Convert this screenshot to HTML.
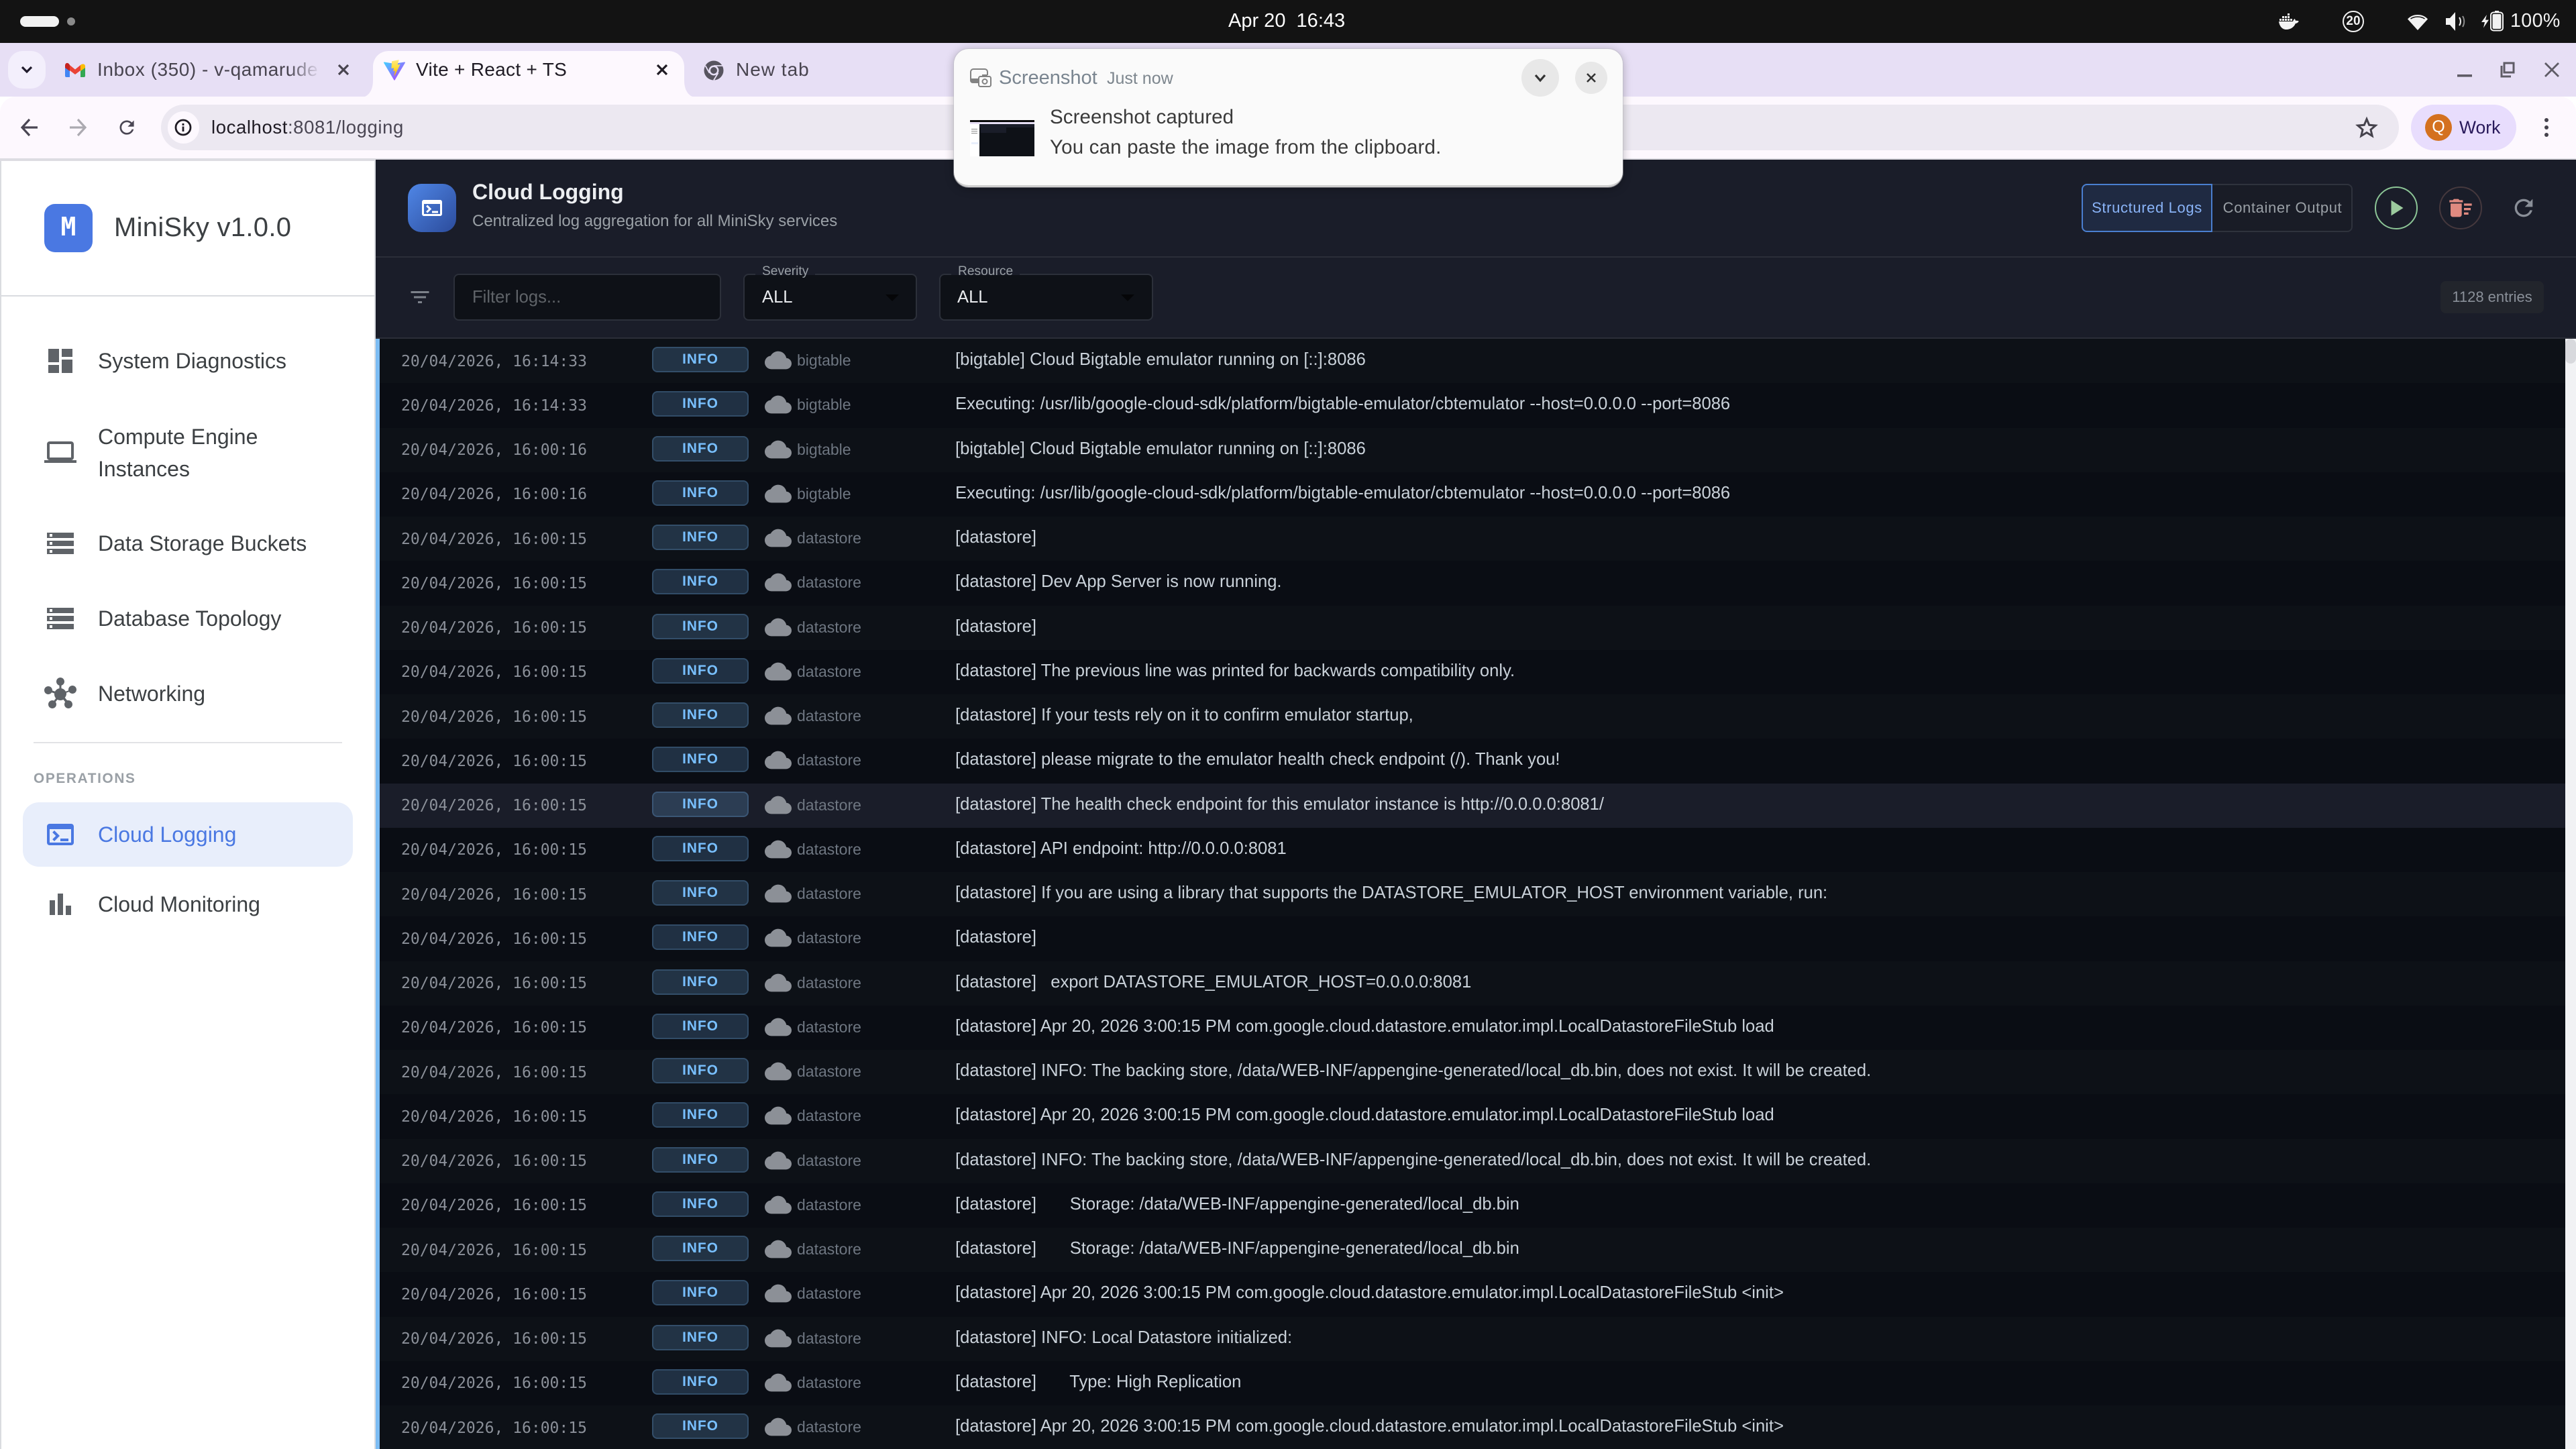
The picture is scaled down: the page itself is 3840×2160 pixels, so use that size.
<!DOCTYPE html>
<html lang="en"><head><meta charset="utf-8"><title>Vite + React + TS</title>
<style>
*{box-sizing:border-box}
html,body{margin:0;padding:0;width:3840px;height:2160px;overflow:hidden;background:#fff;font-family:"Liberation Sans",sans-serif}
.a{position:absolute;white-space:pre}
svg{position:absolute;display:block;overflow:visible}
#sys{position:absolute;left:0;top:0;width:3840px;height:64px;background:#131313}
#strip{position:absolute;left:0;top:64px;width:3840px;height:80px;background:#e7dff5}
#tool{position:absolute;left:0;top:144px;width:3840px;height:92px;background:#fdf8fe;border-radius:24px 24px 0 0}
#tline{position:absolute;left:0;top:236px;width:3840px;height:4px;background:#dddce2}
#omni{position:absolute;left:240px;top:156px;width:3336px;height:68px;border-radius:34px;background:#ece8f1}
#side{position:absolute;left:0;top:240px;width:560px;height:1920px;background:#fff;border-left:2px solid #dadce0;border-right:2px solid #dadce0}
.nav{position:absolute;left:146px;font-size:32px;line-height:48px;color:#3c4043;white-space:pre}
#main{position:absolute;left:560px;top:238px;width:3280px;height:1922px;background:#1a1d29}
.box{position:absolute;background:#0e1117;border:2px solid #2c303a;border-radius:8px;height:70px;top:408px}
.lab{position:absolute;top:394px;height:16px;background:#1a1d29;font-size:19.2px;line-height:22px;color:#9aa0a6;white-space:pre;padding:0 10px}
.v{position:absolute;top:428px;font-size:25.6px;line-height:30px;white-space:pre}
#rows{position:absolute;left:560px;top:505px;width:3264px;height:1655px;border-left:6px solid #7cbcf3;overflow:hidden}
.r{position:relative;height:66.25px;background:#0d1117}
.r:nth-child(even){background:#0a0d14}
.r.h{background:#1a1d29}
.r i{position:absolute;left:32px;top:18.5px;font:normal 23px/30px "DejaVu Sans Mono",monospace;color:#8b9099;white-space:pre}
.r b{position:absolute;left:406px;top:12px;width:144px;height:38px;border-radius:8px;background:rgba(121,192,255,.2);border:2px solid rgba(121,192,255,.2);color:#79c0ff;font:bold 20.8px/33px "Liberation Sans",sans-serif;letter-spacing:1.04px;text-align:center}
.r svg{left:574px;top:12px;width:40px;height:40px;fill:#8c9097}
.r u{position:absolute;left:622px;top:17px;font-size:23px;line-height:30px;color:#6e7681;text-decoration:none}
.r p{position:absolute;left:858px;top:16px;margin:0;font-size:25.6px;line-height:30px;color:#c9d1d9;white-space:pre}
#note{position:absolute;left:1422px;top:73px;width:997px;height:206px;background:#fafafa;border-radius:22px;border-bottom:3px solid #cfcfcf;box-shadow:0 0 0 1px rgba(190,190,195,.5),0 2px 14px rgba(0,0,0,.28)}
</style></head><body>

<svg width="0" height="0" style="position:absolute"><defs>
<symbol id="c" viewBox="0 0 24 24"><path d="M19.35 10.04C18.67 6.59 15.64 4 12 4 9.11 4 6.6 5.64 5.35 8.04 2.34 8.36 0 10.91 0 14c0 3.31 2.69 6 6 6h13c2.76 0 5-2.24 5-5 0-2.64-2.05-4.78-4.65-4.96z"/></symbol>
<symbol id="st" viewBox="0 0 24 24"><path d="M2 20h20v-4H2v4zm2-3h2v2H4v-2zM2 4v4h20V4H2zm4 3H4V5h2v2zm-4 7h20v-4H2v4zm2-3h2v2H4v-2z"/></symbol>
<symbol id="tm" viewBox="0 0 24 24"><path d="M20 4H4c-1.1 0-2 .9-2 2v12c0 1.1.9 2 2 2h16c1.1 0 2-.9 2-2V6c0-1.1-.9-2-2-2zm0 14H4V8h16v10zm-2-1h-6v-2h6v2zM7.5 17l-1.41-1.41L8.67 13l-2.59-2.59L7.5 9l4 4-4 4z"/></symbol>
<linearGradient id="vg" x1="0" y1="0" x2="1" y2="1"><stop offset="0" stop-color="#41d1ff"/><stop offset="1" stop-color="#bd34fe"/></linearGradient>
<linearGradient id="vy" x1="0" y1="0" x2="0" y2="1"><stop offset="0" stop-color="#ffea83"/><stop offset=".5" stop-color="#ffdd35"/><stop offset="1" stop-color="#ffa800"/></linearGradient>
</defs></svg>

<div id="sys"></div>
<div class="a" style="left:30px;top:24px;width:58px;height:16px;border-radius:8px;background:#f2f2f2"></div>
<div class="a" style="left:100px;top:26px;width:12px;height:12px;border-radius:6px;background:#8a8a8a"></div>
<div class="a" style="left:1831px;top:14px;font-size:29px;line-height:34px;color:#fff">Apr 20  16:43</div>
<!-- docker -->
<svg style="left:3397px;top:20px" width="30" height="24" viewBox="0 0 30 24" fill="#f2f2f2"><path d="M13 0h3v3h-3zM5 4h3v3H5zM9 4h3v3H9zM13 4h3v3h-3zM1 8h3v3H1zM5 8h3v3H5zM9 8h3v3H9zM13 8h3v3h-3zM17 8h3v3h-3z"/><path d="M0 12h21c.6-2 1.6-3.2 2.6-4 .8 1 1.2 1.9 1.4 3 1.6-.4 3.4-.2 4.8.8C28.5 14 26.8 15 24.8 15 23 20 18 24 11 24 5 24 1 19 0 12z"/></svg>
<svg style="left:3492px;top:16px" width="32" height="32" viewBox="0 0 32 32"><circle cx="16" cy="16" r="15" fill="none" stroke="#f2f2f2" stroke-width="2"/></svg>
<div class="a" style="left:3492px;top:16px;width:32px;text-align:center;font:bold 19px/32px 'Liberation Sans',sans-serif;color:#f2f2f2">20</div>
<svg style="left:3589px;top:21px" width="30" height="24" viewBox="0 0 30 24"><path d="M0 7.5C4 3 9 1 15 1s11 2 15 6.5L15 24z" fill="#f2f2f2"/><path d="M4.5 7C7.5 5 11 4 15 4s7.5 1 10.5 3" fill="none" stroke="#131313" stroke-width="1.5"/></svg>
<svg style="left:3646px;top:18px" width="28" height="28" viewBox="0 0 28 28"><path d="M0 9h6l8-9v28l-8-9H0z" fill="#f2f2f2"/><path d="M20 8c2.5 3.5 2.5 8.5 0 12" fill="none" stroke="#f2f2f2" stroke-width="2"/><path d="M25 6c3 5 3 11 0 16" fill="none" stroke="#f2f2f2" stroke-width="2" opacity=".55"/></svg>
<svg style="left:3699px;top:16px" width="34" height="30" viewBox="0 0 34 30"><path d="M8 7 0 20h5l-2 10 8-14H6z" fill="#f2f2f2" transform="scale(1 .85)"/><rect x="14" y="2.5" width="18" height="27" rx="4" fill="none" stroke="#f2f2f2" stroke-width="2"/><rect x="20" y="0" width="6" height="3" fill="#f2f2f2"/><rect x="16.5" y="5" width="13" height="22" rx="2" fill="#f2f2f2"/></svg>
<div class="a" style="left:3742px;top:14px;font-size:28.6px;line-height:34px;color:#f2f2f2;letter-spacing:.4px">100%</div>

<div id="strip"></div>
<div class="a" style="left:12px;top:76px;width:56px;height:56px;border-radius:22px;background:#f3effc"></div>
<svg style="left:30px;top:96px" width="20" height="16" viewBox="0 0 20 16"><path d="M3 4l7 7 7-7" fill="none" stroke="#1f1a2b" stroke-width="3.2"/></svg>

<!-- gmail -->
<svg style="left:97px;top:93px" width="30" height="22" viewBox="0 0 30 22"><path d="M0 5h7v17H2a2 2 0 0 1-2-2z" fill="#4285f4"/><path d="M23 5h7v15a2 2 0 0 1-2 2h-5z" fill="#34a853"/><path d="M7 4l8 6.5L23 4v8l-8 6-8-6z" fill="#ea4335"/><path d="M23 4c2-2 7-2.5 7 2v2l-7 5z" fill="#fbbc04"/><path d="M7 4C5-.5 0 0 0 5v3l7 5z" fill="#c5221f"/></svg>
<div class="a" style="left:145px;top:88px;width:331px;height:34px;overflow:hidden;font-size:28px;line-height:32px;color:#48444f;letter-spacing:.55px">Inbox (350) - v-qamarude</div>
<div class="a" style="left:430px;top:88px;width:48px;height:34px;background:linear-gradient(90deg,rgba(231,223,245,0),#e7dff5)"></div>
<svg style="left:503px;top:95px" width="18" height="18" viewBox="0 0 18 18"><path d="M2 2l14 14M16 2L2 16" stroke="#48444f" stroke-width="3.2"/></svg>

<svg style="left:0;top:0" width="3840" height="160" viewBox="0 0 3840 160"><path d="M534 146C550 146 556 134 556 120V100C556 86 566 76 580 76H996C1010 76 1020 86 1020 100V120C1020 134 1026 146 1042 146Z" fill="#fdf8fe"/></svg>
<svg style="left:572px;top:89px" width="32" height="31" viewBox="0 0 32 31"><path d="M31.88 4.6 16.6 30.36a.72.72 0 0 1-1.25 0L.1 4.6a.72.72 0 0 1 .75-1.07l14.9 2.38c.08.02.17.02.25 0l15.1-2.37a.72.72 0 0 1 .78 1.06Z" fill="url(#vg)"/><path d="M22.2.2 12.4 2.1a.36.36 0 0 0-.29.33l-.6 10.2a.36.36 0 0 0 .44.37l2.73-.63a.36.36 0 0 1 .43.42l-.81 3.97a.36.36 0 0 0 .46.42l1.69-.51a.36.36 0 0 1 .46.42l-1.29 6.25c-.08.39.44.6.66.27l.14-.22 8-15.96a.36.36 0 0 0-.39-.52l-2.81.54a.36.36 0 0 1-.41-.45l1.84-6.36a.36.36 0 0 0-.41-.45Z" fill="url(#vy)"/></svg>
<div class="a" style="left:620px;top:88px;font-size:28px;line-height:32px;color:#1f1b24;letter-spacing:.3px">Vite + React + TS</div>
<svg style="left:978px;top:95px" width="18" height="18" viewBox="0 0 18 18"><path d="M2 2l14 14M16 2L2 16" stroke="#1f1b24" stroke-width="3.2"/></svg>

<svg style="left:1049px;top:90px" width="30" height="30" viewBox="0 0 30 30"><circle cx="15" cy="15" r="14.5" fill="#57545f"/><circle cx="15" cy="15" r="7.5" fill="#e7dff5"/><circle cx="15" cy="15" r="5" fill="#57545f"/><path d="M15 8h13M8.5 18.8 2.5 8M21.5 18.8 15 29.5" stroke="#e7dff5" stroke-width="1.8" fill="none"/></svg>
<div class="a" style="left:1097px;top:88px;font-size:28px;line-height:32px;color:#48444f;letter-spacing:1px">New tab</div>

<svg style="left:3663px;top:92px" width="152" height="24" viewBox="0 0 152 24"><rect x="0" y="19" width="22" height="3.6" fill="#5f5c66"/><path d="M66 6v16h14M70 2h14v14H70z" fill="none" stroke="#5f5c66" stroke-width="3"/><path d="M131 2l20 20M151 2l-20 20" stroke="#5f5c66" stroke-width="2.8"/></svg>

<div id="tool"></div>
<div id="tline"></div>
<svg style="left:31px;top:176px" width="26" height="28" viewBox="0 0 26 28"><path d="M13 2 2 14l11 12M2 14h23" fill="none" stroke="#4a4653" stroke-width="3.2"/></svg>
<svg style="left:103px;top:176px" width="26" height="28" viewBox="0 0 26 28"><path d="M13 2l11 12-11 12M24 14H1" fill="none" stroke="#acaab1" stroke-width="3.2"/></svg>
<svg style="left:175px;top:176px" width="28" height="28" viewBox="0 0 24 24"><path d="M17.65 6.35C16.2 4.9 14.21 4 12 4c-4.42 0-7.99 3.58-7.99 8s3.57 8 7.99 8c3.73 0 6.84-2.55 7.73-6h-2.08c-.82 2.33-3.04 4-5.65 4-3.31 0-6-2.69-6-6s2.69-6 6-6c1.66 0 3.14.69 4.22 1.78L13 11h7V4l-2.35 2.35z" fill="#4a4653" transform="translate(-1.5 -1.5) scale(1.13)"/></svg>
<div id="omni"></div>
<div class="a" style="left:250px;top:166px;width:47px;height:48px;border-radius:24px;background:#fdf8fe"></div>
<svg style="left:260px;top:177px" width="26" height="26" viewBox="0 0 26 26"><circle cx="13" cy="13" r="11" fill="none" stroke="#1f1b24" stroke-width="2.8"/><path d="M13 11.5v7.5M13 7v3" stroke="#1f1b24" stroke-width="2.8"/></svg>
<div class="a" style="left:315px;top:173px;font-size:27.5px;line-height:34px;color:#1f1b24;letter-spacing:.6px">localhost<span style="color:#4a4653">:8081/logging</span></div>
<svg style="left:3512px;top:174px" width="32" height="32" viewBox="0 0 32 32"><path d="M16 3.5l3.7 8.8 9.5.8-7.2 6.2 2.2 9.300L16 23.6l-8.2 5 2.2-9.3-7.2-6.2 9.5-.8z" fill="none" stroke="#45424c" stroke-width="3"/></svg>
<div class="a" style="left:3594px;top:156px;width:157px;height:68px;border-radius:34px;background:#e8ddfd"></div>
<div class="a" style="left:3615px;top:170px;width:40px;height:40px;border-radius:20px;background:#d4711f;color:#fff;font-size:25px;line-height:38px;text-align:center">Q</div>
<div class="a" style="left:3666px;top:174px;font-size:26.5px;line-height:32px;color:#28195a">Work</div>
<svg style="left:3790px;top:176px" width="12" height="28" viewBox="0 0 12 28" fill="#45424c"><circle cx="6" cy="3" r="3"/><circle cx="6" cy="14" r="3"/><circle cx="6" cy="25" r="3"/></svg>

<div id="side"></div>
<div class="a" style="left:66px;top:304px;width:72px;height:72px;border-radius:16px;background:#4a78e2;color:#fff;font:bold 38px/68px 'DejaVu Sans Mono',monospace;text-align:center">M</div>
<div class="a" style="left:170px;top:315px;font-size:40px;line-height:48px;letter-spacing:.3px;color:#3c4043">MiniSky v1.0.0</div>
<div class="a" style="left:2px;top:440px;width:556px;height:2px;background:#dadce0"></div>

<svg style="left:66px;top:514px" width="48" height="48" viewBox="0 0 24 24" fill="#5f6368"><path d="M3 13h8V3H3v10zm0 8h8v-6H3v6zm10 0h8V11h-8v10zm0-18v6h8V3h-8z"/></svg>
<div class="nav" style="top:514px">System Diagnostics</div>
<svg style="left:66px;top:650px" width="48" height="48" viewBox="0 0 24 24" fill="#5f6368"><path d="M20 18c1.1 0 1.99-.9 1.99-2L22 6c0-1.1-.9-2-2-2H4c-1.1 0-2 .9-2 2v10c0 1.1.9 2 2 2H0v2h24v-2h-4zM4 6h16v10H4V6z"/></svg>
<div class="nav" style="top:627px">Compute Engine
Instances</div>
<svg style="left:66px;top:786px;fill:#5f6368" width="48" height="48"><use href="#st"/></svg>
<div class="nav" style="top:786px">Data Storage Buckets</div>
<svg style="left:66px;top:898px;fill:#5f6368" width="48" height="48"><use href="#st"/></svg>
<div class="nav" style="top:898px">Database Topology</div>
<svg style="left:66px;top:1010px" width="48" height="48" viewBox="0 0 24 24" fill="#5f6368"><path d="M8.4 18.2c.38.5.6 1.12.6 1.8 0 1.66-1.34 3-3 3s-3-1.34-3-3 1.34-3 3-3c.44 0 .85.09 1.23.26l1.41-1.77c-.92-1.03-1.29-2.39-1.09-3.69l-2.03-.68c-.54.83-1.46 1.38-2.52 1.38-1.66 0-3-1.34-3-3s1.34-3 3-3 3 1.34 3 3c0 .07 0 .14-.01.21l2.03.68c.64-1.21 1.82-2.09 3.22-2.32l0-2.16C9.96 5.57 9 4.4 9 3c0-1.66 1.34-3 3-3s3 1.34 3 3c0 1.4-.96 2.57-2.25 2.91v2.16c1.4.23 2.58 1.11 3.22 2.32l2.03-.68C18 9.14 18 9.07 18 9c0-1.66 1.34-3 3-3s3 1.34 3 3-1.34 3-3 3c-1.06 0-1.98-.55-2.52-1.37l-2.03.68c.2 1.29-.16 2.65-1.09 3.69l1.41 1.77C17.15 17.09 17.56 17 18 17c1.66 0 3 1.34 3 3s-1.34 3-3 3-3-1.34-3-3c0-.68.22-1.3.6-1.8l-1.41-1.77c-1.35.75-3.01.76-4.37 0L8.4 18.2z"/></svg>
<div class="nav" style="top:1010px">Networking</div>
<div class="a" style="left:50px;top:1106px;width:460px;height:2px;background:#e2e3e6"></div>
<div class="a" style="left:50px;top:1149px;font-size:20.8px;line-height:24px;font-weight:bold;letter-spacing:1.66px;color:#9aa0a6">OPERATIONS</div>
<div class="a" style="left:34px;top:1196px;width:492px;height:96px;border-radius:24px;background:#e8eefb"></div>
<svg style="left:66px;top:1220px;fill:#4a78e2" width="48" height="48"><use href="#tm"/></svg>
<div class="nav" style="top:1220px;color:#4a78e2">Cloud Logging</div>
<svg style="left:66px;top:1324px" width="48" height="48" viewBox="0 0 24 24" fill="#5f6368"><path d="M4 9h4v11H4zm12 4h4v7h-4zm-6-9h4v16h-4z"/></svg>
<div class="nav" style="top:1324px">Cloud Monitoring</div>

<div id="main"></div>
<div class="a" style="left:560px;top:382px;width:3280px;height:2px;background:#2b2e38"></div>
<div class="a" style="left:560px;top:503px;width:3280px;height:2px;background:#2b2e38"></div>
<div class="a" style="left:608px;top:274px;width:72px;height:72px;border-radius:20px;background:linear-gradient(135deg,#4f86e6,#2c4c9c)"></div>
<svg style="left:626px;top:292px;fill:#fff" width="36" height="36"><use href="#tm"/></svg>
<div class="a" style="left:704px;top:267px;font-size:32px;line-height:38px;font-weight:bold;color:#eceef1">Cloud Logging</div>
<div class="a" style="left:704px;top:316px;font-size:24px;line-height:28px;color:#9aa0a6">Centralized log aggregation for all MiniSky services</div>

<div class="a" style="left:3103px;top:274px;width:404px;height:72px;border:2px solid #2f333d;border-radius:8px;background:#191c26"></div>
<div class="a" style="left:3103px;top:274px;width:195px;height:72px;border:2px solid #4a7fd0;border-radius:8px 0 0 8px;background:#1f2a42;color:#8ab4f8;font-size:22px;line-height:68px;letter-spacing:.63px;text-align:center">Structured Logs</div>
<div class="a" style="left:3298px;top:274px;width:209px;height:72px;color:#9aa0a6;font-size:22px;line-height:72px;letter-spacing:.63px;text-align:center">Container Output</div>
<svg style="left:3540px;top:278px" width="64" height="64" viewBox="0 0 64 64"><circle cx="32" cy="32" r="31" fill="none" stroke="#8cc596" stroke-width="2"/><path d="M24.5 20.5v23l18-11.5z" fill="#9ccb9e"/></svg>
<svg style="left:3636px;top:278px" width="64" height="64" viewBox="0 0 64 64"><circle cx="32" cy="32" r="31" fill="none" stroke="#45383d" stroke-width="2"/><g transform="translate(12 12) scale(1.667)"><path d="M15 16h4v2h-4zm0-8h7v2h-7zm0 4h6v2h-6zM3 18c0 1.1.9 2 2 2h6c1.1 0 2-.9 2-2V8H3v10zM14 5h-3l-1-1H6L5 5H2v2h12z" fill="#e08a80"/></g></svg>
<svg style="left:3742px;top:290px" width="40" height="40" viewBox="0 0 24 24" fill="#8a8f98"><path d="M17.65 6.35C16.2 4.9 14.21 4 12 4c-4.42 0-7.99 3.58-7.99 8s3.57 8 7.99 8c3.73 0 6.84-2.55 7.73-6h-2.08c-.82 2.33-3.04 4-5.65 4-3.31 0-6-2.69-6-6s2.69-6 6-6c1.66 0 3.14.69 4.22 1.78L13 11h7V4l-2.35 2.35z"/></svg>

<svg style="left:608px;top:425px" width="36" height="36" viewBox="0 0 24 24" fill="#7d828b"><path d="M10 18h4v-2h-4v2zM3 6v2h18V6H3zm3 7h12v-2H6v2z"/></svg>
<div class="box" style="left:676px;width:399px"></div>
<div class="v" style="left:704px;color:#5f6368">Filter logs...</div>
<div class="box" style="left:1108px;width:259px"></div>
<div class="lab" style="left:1126px">Severity</div>
<div class="v" style="left:1136px;color:#e8eaed">ALL</div>
<svg style="left:1320px;top:439px" width="20" height="10" viewBox="0 0 20 10"><path d="M0 0h20L10 10z" fill="#050608"/></svg>
<div class="box" style="left:1400px;width:319px"></div>
<div class="lab" style="left:1418px">Resource</div>
<div class="v" style="left:1427px;color:#e8eaed">ALL</div>
<svg style="left:1671px;top:439px" width="20" height="10" viewBox="0 0 20 10"><path d="M0 0h20L10 10z" fill="#050608"/></svg>
<div class="a" style="left:3638px;top:419px;width:154px;height:48px;border-radius:8px;background:#22252c;color:#8a9099;font-size:22px;line-height:48px;text-align:center">1128 entries</div>

<div id="rows">
<div class="r"><i>20/04/2026, 16:14:33</i><b>INFO</b><svg><use href="#c"/></svg><u>bigtable</u><p>[bigtable] Cloud Bigtable emulator running on [::]:8086</p></div>
<div class="r"><i>20/04/2026, 16:14:33</i><b>INFO</b><svg><use href="#c"/></svg><u>bigtable</u><p>Executing: /usr/lib/google-cloud-sdk/platform/bigtable-emulator/cbtemulator --host=0.0.0.0 --port=8086</p></div>
<div class="r"><i>20/04/2026, 16:00:16</i><b>INFO</b><svg><use href="#c"/></svg><u>bigtable</u><p>[bigtable] Cloud Bigtable emulator running on [::]:8086</p></div>
<div class="r"><i>20/04/2026, 16:00:16</i><b>INFO</b><svg><use href="#c"/></svg><u>bigtable</u><p>Executing: /usr/lib/google-cloud-sdk/platform/bigtable-emulator/cbtemulator --host=0.0.0.0 --port=8086</p></div>
<div class="r"><i>20/04/2026, 16:00:15</i><b>INFO</b><svg><use href="#c"/></svg><u>datastore</u><p>[datastore]</p></div>
<div class="r"><i>20/04/2026, 16:00:15</i><b>INFO</b><svg><use href="#c"/></svg><u>datastore</u><p>[datastore] Dev App Server is now running.</p></div>
<div class="r"><i>20/04/2026, 16:00:15</i><b>INFO</b><svg><use href="#c"/></svg><u>datastore</u><p>[datastore]</p></div>
<div class="r"><i>20/04/2026, 16:00:15</i><b>INFO</b><svg><use href="#c"/></svg><u>datastore</u><p>[datastore] The previous line was printed for backwards compatibility only.</p></div>
<div class="r"><i>20/04/2026, 16:00:15</i><b>INFO</b><svg><use href="#c"/></svg><u>datastore</u><p>[datastore] If your tests rely on it to confirm emulator startup,</p></div>
<div class="r"><i>20/04/2026, 16:00:15</i><b>INFO</b><svg><use href="#c"/></svg><u>datastore</u><p>[datastore] please migrate to the emulator health check endpoint (/). Thank you!</p></div>
<div class="r h"><i>20/04/2026, 16:00:15</i><b>INFO</b><svg><use href="#c"/></svg><u>datastore</u><p>[datastore] The health check endpoint for this emulator instance is http://0.0.0.0:8081/</p></div>
<div class="r"><i>20/04/2026, 16:00:15</i><b>INFO</b><svg><use href="#c"/></svg><u>datastore</u><p>[datastore] API endpoint: http://0.0.0.0:8081</p></div>
<div class="r"><i>20/04/2026, 16:00:15</i><b>INFO</b><svg><use href="#c"/></svg><u>datastore</u><p>[datastore] If you are using a library that supports the DATASTORE_EMULATOR_HOST environment variable, run:</p></div>
<div class="r"><i>20/04/2026, 16:00:15</i><b>INFO</b><svg><use href="#c"/></svg><u>datastore</u><p>[datastore]</p></div>
<div class="r"><i>20/04/2026, 16:00:15</i><b>INFO</b><svg><use href="#c"/></svg><u>datastore</u><p>[datastore]   export DATASTORE_EMULATOR_HOST=0.0.0.0:8081</p></div>
<div class="r"><i>20/04/2026, 16:00:15</i><b>INFO</b><svg><use href="#c"/></svg><u>datastore</u><p>[datastore] Apr 20, 2026 3:00:15 PM com.google.cloud.datastore.emulator.impl.LocalDatastoreFileStub load</p></div>
<div class="r"><i>20/04/2026, 16:00:15</i><b>INFO</b><svg><use href="#c"/></svg><u>datastore</u><p>[datastore] INFO: The backing store, /data/WEB-INF/appengine-generated/local_db.bin, does not exist. It will be created.</p></div>
<div class="r"><i>20/04/2026, 16:00:15</i><b>INFO</b><svg><use href="#c"/></svg><u>datastore</u><p>[datastore] Apr 20, 2026 3:00:15 PM com.google.cloud.datastore.emulator.impl.LocalDatastoreFileStub load</p></div>
<div class="r"><i>20/04/2026, 16:00:15</i><b>INFO</b><svg><use href="#c"/></svg><u>datastore</u><p>[datastore] INFO: The backing store, /data/WEB-INF/appengine-generated/local_db.bin, does not exist. It will be created.</p></div>
<div class="r"><i>20/04/2026, 16:00:15</i><b>INFO</b><svg><use href="#c"/></svg><u>datastore</u><p>[datastore]       Storage: /data/WEB-INF/appengine-generated/local_db.bin</p></div>
<div class="r"><i>20/04/2026, 16:00:15</i><b>INFO</b><svg><use href="#c"/></svg><u>datastore</u><p>[datastore]       Storage: /data/WEB-INF/appengine-generated/local_db.bin</p></div>
<div class="r"><i>20/04/2026, 16:00:15</i><b>INFO</b><svg><use href="#c"/></svg><u>datastore</u><p>[datastore] Apr 20, 2026 3:00:15 PM com.google.cloud.datastore.emulator.impl.LocalDatastoreFileStub &lt;init&gt;</p></div>
<div class="r"><i>20/04/2026, 16:00:15</i><b>INFO</b><svg><use href="#c"/></svg><u>datastore</u><p>[datastore] INFO: Local Datastore initialized:</p></div>
<div class="r"><i>20/04/2026, 16:00:15</i><b>INFO</b><svg><use href="#c"/></svg><u>datastore</u><p>[datastore]       Type: High Replication</p></div>
<div class="r"><i>20/04/2026, 16:00:15</i><b>INFO</b><svg><use href="#c"/></svg><u>datastore</u><p>[datastore] Apr 20, 2026 3:00:15 PM com.google.cloud.datastore.emulator.impl.LocalDatastoreFileStub &lt;init&gt;</p></div>
</div>
<div class="a" style="left:3824px;top:505px;width:16px;height:1655px;background:#f1f2f4"></div>
<div class="a" style="left:3824px;top:505px;width:16px;height:37px;border-radius:8px;background:#d8d9dd"></div>

<div id="note"></div>
<svg style="left:1446px;top:102px" width="32" height="28" viewBox="0 0 32 28"><path d="M14 1H5a4 4 0 0 0-4 4v13a3 3 0 0 0 3 3h8" fill="none" stroke="#828282" stroke-width="2"/><path d="M1 15v3a3 3 0 0 0 3 3h8v-6z" fill="#828282"/><path d="M14 1h8a4 4 0 0 1 4 4v5" fill="none" stroke="#828282" stroke-width="2"/><rect x="13" y="12" width="18" height="15" rx="2.5" fill="#fafafa" stroke="#828282" stroke-width="2"/><rect x="18" y="9" width="8" height="3" fill="#828282"/><circle cx="22" cy="19.5" r="3.5" fill="none" stroke="#828282" stroke-width="2"/></svg>
<div class="a" style="left:1489px;top:98px;font-size:29px;line-height:36px;color:#7a8590">Screenshot</div>
<div class="a" style="left:1650px;top:101px;font-size:25px;line-height:32px;color:#7d868e">Just now</div>
<div class="a" style="left:2268px;top:88px;width:56px;height:56px;border-radius:28px;background:#e8e8e8"></div>
<svg style="left:2287px;top:109px" width="18" height="14" viewBox="0 0 18 14"><path d="M2 3l7 8 7-8" fill="none" stroke="#333" stroke-width="3.2"/></svg>
<div class="a" style="left:2348px;top:92px;width:48px;height:48px;border-radius:24px;background:#e8e8e8"></div>
<svg style="left:2364px;top:108px" width="16" height="16" viewBox="0 0 16 16"><path d="M2 2l12 12M14 2L2 14" stroke="#333" stroke-width="2.6"/></svg>
<svg style="left:1446px;top:179px" width="96" height="54" viewBox="0 0 96 54"><rect width="96" height="54" fill="#fff"/><rect width="96" height="3" fill="#0a0a0a"/><rect y="3" width="96" height="3" fill="#e7dff5"/><rect x="14" y="6" width="82" height="48" fill="#0e1117"/><rect x="14" y="6" width="82" height="5" fill="#1a1d29"/><rect x="16" y="11" width="38" height="8" fill="#1a1d29"/><rect x="2" y="33" width="10" height="3" fill="#e8eefb"/><rect x="2" y="13" width="9" height="1" fill="#888"/><rect x="2" y="16" width="9" height="1" fill="#888"/><rect x="2" y="19" width="9" height="1" fill="#888"/></svg>
<div class="a" style="left:1565px;top:157px;font-size:29.5px;line-height:36px;color:#3a3a3a;letter-spacing:.1px">Screenshot captured</div>
<div class="a" style="left:1565px;top:202px;font-size:29.5px;line-height:36px;color:#3a3a3a;letter-spacing:.17px">You can paste the image from the clipboard.</div>
</body></html>
